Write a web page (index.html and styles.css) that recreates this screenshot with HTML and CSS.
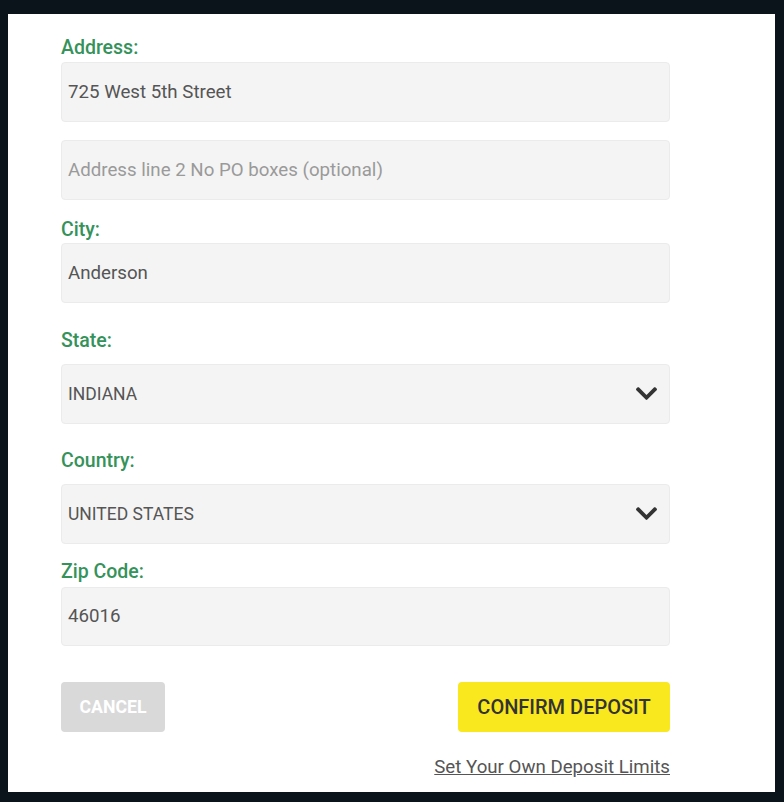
FILE: index.html
```html
<!DOCTYPE html>
<html lang="en">
<head>
<meta charset="utf-8">
<title>Deposit Address</title>
<link rel="stylesheet" href="styles.css">
</head>
<body>
<div class="panel">
  <form class="form">
    <label class="label">Address:</label>
    <div class="field"><span class="value">725 West 5th Street</span></div>
    <div class="field field-gap"><span class="placeholder">Address line 2 No PO boxes (optional)</span></div>

    <label class="label label-city">City:</label>
    <div class="field field-city"><span class="value">Anderson</span></div>

    <label class="label label-select label-state">State:</label>
    <div class="field select field-select">
      <span class="select-value">INDIANA</span>
      <svg class="chev" viewBox="5 121 438 268" width="21" height="13"><path d="M207.029 381.476L12.686 187.132c-9.373-9.373-9.373-24.569 0-33.941l22.667-22.667c9.357-9.357 24.522-9.375 33.901-.04L224 284.505l154.745-154.021c9.379-9.335 24.544-9.317 33.901.04l22.667 22.667c9.373 9.373 9.373 24.569 0 33.941L240.971 381.476c-9.373 9.372-24.569 9.372-33.942 0z" fill="#333"/></svg>
    </div>

    <label class="label label-select label-country">Country:</label>
    <div class="field select field-select">
      <span class="select-value">UNITED STATES</span>
      <svg class="chev" viewBox="5 121 438 268" width="21" height="13"><path d="M207.029 381.476L12.686 187.132c-9.373-9.373-9.373-24.569 0-33.941l22.667-22.667c9.357-9.357 24.522-9.375 33.901-.04L224 284.505l154.745-154.021c9.379-9.335 24.544-9.317 33.901.04l22.667 22.667c9.373 9.373 9.373 24.569 0 33.941L240.971 381.476c-9.373 9.372-24.569 9.372-33.942 0z" fill="#333"/></svg>
    </div>

    <label class="label label-zip">Zip Code:</label>
    <div class="field field-zip"><span class="value">46016</span></div>

    <div class="actions">
      <button type="button" class="btn btn-cancel">CANCEL</button>
      <button type="button" class="btn btn-confirm">CONFIRM DEPOSIT</button>
    </div>
    <div class="limits"><a class="limits-link" href="#">Set Your Own Deposit Limits</a></div>
  </form>
</div>
</body>
</html>
```

FILE: styles.css
```css
html, body {
  margin: 0;
  padding: 0;
  background: #0b131b;
}
body {
  padding: 14px 9px 0 8px;
  font-family: Roboto, "Liberation Sans", Arial, sans-serif;
}
.panel {
  background: #ffffff;
  height: 778px;
  overflow: hidden;
  box-sizing: border-box;
  padding: 22px 0 0 53px;
}
.form {
  width: 609px;
  display: flex;
  flex-direction: column;
}
.label {
  display: block;
  font-size: 19.5px;
  line-height: 23px;
  font-weight: 500;
  color: #35925a;
  margin: 0 0 3px 0;
}
.label-city { margin: 18.5px 0 2px 0; }
.label-state { margin: 26.5px 0 12px 0; }
.label-country { margin: 25.5px 0 12px 0; }
.label-zip { margin: 16.5px 0 3.5px 0; }
.field {
  box-sizing: border-box;
  height: 59.5px;
  flex: 0 0 59.5px;
  background: #f4f4f4;
  border: 1px solid #ebebeb;
  border-radius: 4px;
  padding: 0 12px 0 6px;
  display: flex;
  align-items: center;
  justify-content: space-between;
  font-size: 18.7px;
  line-height: 22px;
}
.field-gap { margin-top: 18.5px; }
.value { color: #555555; }
.placeholder { color: #9a9a9a; }
.select-value {
  color: #555555;
  font-size: 17.5px;
}
.chev { display: block; }
.actions {
  margin-top: 35.5px;
  display: flex;
  justify-content: space-between;
}
.btn {
  height: 50px;
  border: none;
  border-radius: 4px;
  font-family: Roboto, "Liberation Sans", Arial, sans-serif;
  cursor: pointer;
  padding: 0;
}
.btn-cancel {
  width: 104px;
  background: #d9d9d9;
  color: #ffffff;
  font-weight: 700;
  font-size: 17.7px;
}
.btn-confirm {
  width: 212px;
  background: #f9e81e;
  color: #333333;
  font-weight: 500;
  font-size: 20px;
}
.limits {
  margin-top: 24.5px;
  text-align: right;
  font-size: 18.7px;
  line-height: 22px;
}
.limits-link {
  color: #555555;
  text-decoration: underline;
}
```
